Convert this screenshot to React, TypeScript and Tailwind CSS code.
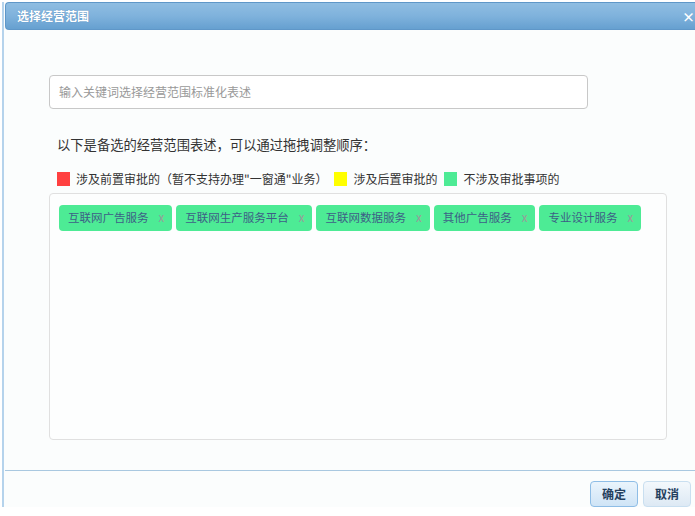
const TAGS = ['互联网广告服务', '互联网生产服务平台', '互联网数据服务', '其他广告服务', '专业设计服务'];

const LEGEND = [
  { color: 'bg-[#ff4040]', label: '涉及前置审批的（暂不支持办理"一窗通"业务）' },
  { color: 'bg-[#ffff00]', label: '涉及后置审批的' },
  { color: 'bg-[#4deb95]', label: '不涉及审批事项的' },
];

export default function App() {
  return (
    <div
      className="relative h-[516px] w-[695px] overflow-hidden bg-white pl-[2px] pt-[2px] text-[#333]"
      style={{ fontFamily: '"Noto Sans CJK SC", "Liberation Sans", sans-serif' }}
    >
      <div className="flex h-[505px] w-[720px] flex-col border-l-2 border-[#b5d3ec] bg-[#fbfdfd]">
        {/* title bar */}
        <div className="ml-px flex h-[29px] items-center rounded-l-[4px] border border-r-0 border-[#5f97c8] bg-gradient-to-b from-[#8fbde2] via-[#7fb2dc] to-[#66a0d0] pl-[11px]">
          <span className="text-[12px] font-bold text-white [text-shadow:0_0_1px_#4a7fb0]">选择经营范围</span>
          <span className="ml-[593px] text-[13px] font-bold leading-none text-white">×</span>
        </div>

        <div className="flex flex-col pl-[45px]">
          <div className="mt-[45px] flex h-[34px] w-[539px] items-center rounded-[4px] border border-[#c8c8c8] bg-white pl-[9px] text-[12px] text-[#999]">
            输入关键词选择经营范围标准化表述
          </div>

          <div className="mt-[26px] pl-[8px] text-[13.3px] leading-[20px] text-[#333]">
            以下是备选的经营范围表述，可以通过拖拽调整顺序：
          </div>

          <div className="mt-[17px] flex items-center pl-[8px] text-[12px] leading-[14px]">
            {LEGEND.map((l, i) => (
              <div key={i} className={`flex items-center ${i === 0 ? '' : 'ml-[7px]'}`}>
                <span className={`mr-[6px] inline-block h-[14px] w-[13px] ${l.color}`} />
                {l.label}
              </div>
            ))}
          </div>

          <div className="mt-[7px] h-[247px] w-[618px] rounded-[4px] border border-[#e0e0e0] bg-[#fdfefe] pl-[9px] pt-[11px]">
            <div className="flex gap-[4px]">
              {TAGS.map((t) => (
                <div
                  key={t}
                  className="flex h-[26px] items-center rounded-[4px] bg-[#4deb95] pl-[9px] pr-[8px] text-[11.5px] text-[#3d5f86]"
                >
                  {t}
                  <span className="ml-[10px] text-[11.5px] text-[#9a9a9a]">x</span>
                </div>
              ))}
            </div>
          </div>
        </div>

        <div className="mt-[30px] ml-px h-px w-full bg-[#a9c8e0]" />

        <div className="mt-[10px] flex pl-[586px]">
          <button className="h-[26px] w-[48px] rounded-[4px] border border-[#8ebde6] bg-gradient-to-b from-[#eaf4fc] to-[#cfe4f6] text-[12px] font-bold text-[#24405e]">
            确定
          </button>
          <button className="ml-[5px] h-[26px] w-[48px] rounded-[4px] border border-[#c9dff0] bg-gradient-to-b from-[#f3f8fc] to-[#dde9f4] text-[12px] font-bold text-[#24405e]">
            取消
          </button>
        </div>
      </div>
    </div>
  );
}
